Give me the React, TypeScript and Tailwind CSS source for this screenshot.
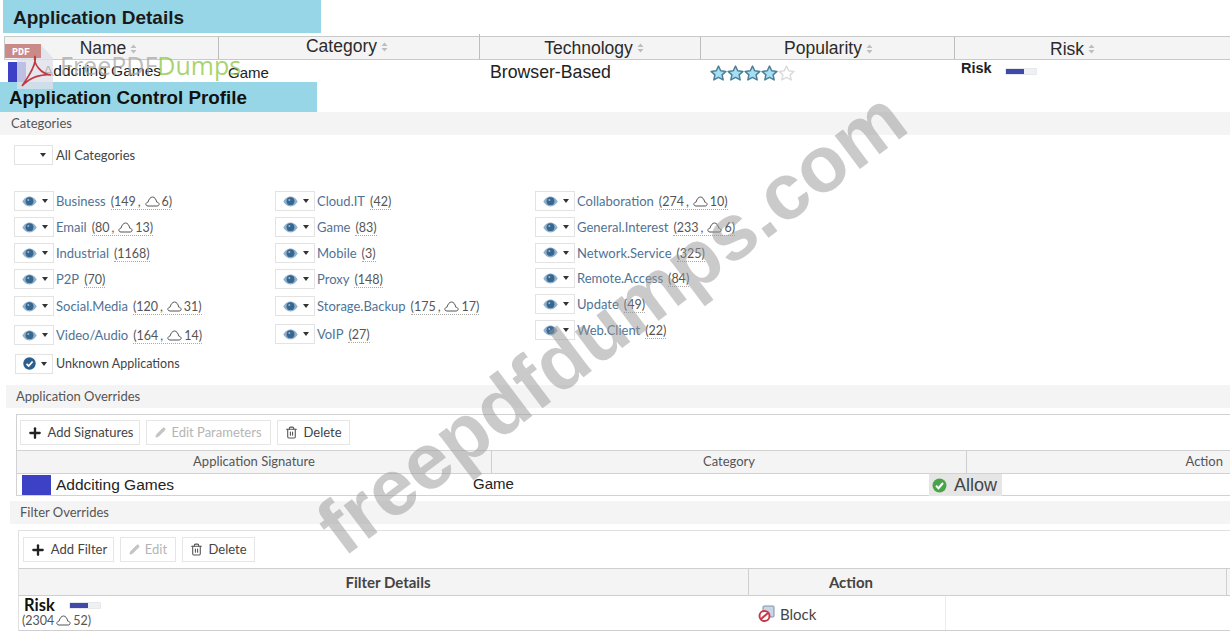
import React from 'react';
import { Plus, Pencil, Trash2 } from 'lucide-react';

const SANS = "font-['Liberation_Sans',Arial,sans-serif]";
const LATO = "font-['Lato','Open_Sans',sans-serif]";

function Sort() {
  return (
    <svg width="7" height="10" viewBox="0 0 7 10" className="inline-block ml-1 align-[-1px]">
      <path d="M3.5 0.5 L6.5 4 H0.5 Z M3.5 9.5 L6.5 6 H0.5 Z" fill="#b9bec2" />
    </svg>
  );
}

function Eye() {
  return (
    <svg width="15" height="11" viewBox="0 0 15 11">
      <path d="M0.3 5.5 C3 1.3 5.5 0.6 7.5 0.6 C9.5 0.6 12 1.3 14.7 5.5 C12 9.7 9.5 10.4 7.5 10.4 C5.5 10.4 3 9.7 0.3 5.5 Z" fill="#8fb0cc" />
      <circle cx="7.5" cy="5.2" r="3.9" fill="#37668f" />
      <circle cx="6.3" cy="4" r="1" fill="#9dbad3" />
    </svg>
  );
}

function Caret() {
  return (
    <svg width="6" height="4" viewBox="0 0 6 4">
      <path d="M0 0 H6 L3 4 Z" fill="#333" />
    </svg>
  );
}

function Cloud() {
  return (
    <svg width="15" height="11" viewBox="0 0 15 11" className="inline-block mx-[2px] align-[-1px]">
      <path d="M3 10 C1.3 10 .7 8.8 .9 7.8 C1.1 6.8 2 6.3 3 6.2 C3.8 3 5.6 1 7.5 1 C9.6 1 11 3 11.8 6.2 C13 6.3 14.1 7 14.1 8.2 C14.1 9.3 13.3 10 12 10 Z" fill="none" stroke="#555" strokeWidth="1" />
    </svg>
  );
}

function Count({ n, cloud }: { n: string; cloud?: string }) {
  return (
    <span className="ml-[5px] text-[12.5px] text-[#555] border-b border-dotted border-[#aaa] leading-[14px]">
      ({n}
      {cloud ? (
        <>
          <span className="mx-[2px]">,</span>
          <Cloud />
          {cloud}
        </>
      ) : null}
      )
    </span>
  );
}

type Cat = { name: string; n: string; cloud?: string; h: number };

function CatRow({ name, n, cloud, h }: Cat) {
  return (
    <div className="flex items-center" style={{ height: h }}>
      <div className="w-[40px] h-[20px] border border-[#e3e3e3] flex items-center justify-center gap-[5px] pl-[1px]">
        <Eye />
        <Caret />
      </div>
      <span className="ml-[2px] text-[13px] text-[#4f7396] translate-y-[1px]">{name}</span>
      <span className="translate-y-[1px]">
        <Count n={n} cloud={cloud} />
      </span>
    </div>
  );
}

const col1: Cat[] = [
  { name: 'Business', n: '149', cloud: '6', h: 26 },
  { name: 'Email', n: '80', cloud: '13', h: 26 },
  { name: 'Industrial', n: '1168', h: 26 },
  { name: 'P2P', n: '70', h: 26 },
  { name: 'Social.Media', n: '120', cloud: '31', h: 28 },
  { name: 'Video/Audio', n: '164', cloud: '14', h: 30 },
];
const col2: Cat[] = [
  { name: 'Cloud.IT', n: '42', h: 26 },
  { name: 'Game', n: '83', h: 26 },
  { name: 'Mobile', n: '3', h: 26 },
  { name: 'Proxy', n: '148', h: 26 },
  { name: 'Storage.Backup', n: '175', cloud: '17', h: 28 },
  { name: 'VoIP', n: '27', h: 28 },
];
const col3: Cat[] = [
  { name: 'Collaboration', n: '274', cloud: '10', h: 26 },
  { name: 'General.Interest', n: '233', cloud: '6', h: 26 },
  { name: 'Network.Service', n: '325', h: 25 },
  { name: 'Remote.Access', n: '84', h: 26 },
  { name: 'Update', n: '49', h: 26 },
  { name: 'Web.Client', n: '22', h: 26 },
];

function Bar({ label, className }: { label: string; className: string }) {
  return (
    <div className={`h-[23px] bg-[#f4f4f4] flex items-center text-[13px] text-[#555] ${className}`}>{label}</div>
  );
}

function Btn({ icon, label, off, w }: { icon: React.ReactNode; label: string; off?: boolean; w: string }) {
  return (
    <div className={`h-[25px] border border-[#e6e6e6] flex items-center justify-center gap-[5px] ${w} ${off ? 'text-[#b5b5b5]' : 'text-[#444]'}`}>
      {icon}
      <span>{label}</span>
    </div>
  );
}

function RiskMeter({ className }: { className: string }) {
  return (
    <span className={`inline-block w-[32px] h-[7px] bg-[#eef0f3] rounded-[1px] border border-[#e6e8ec] ${className}`}>
      <span className="block w-[18px] h-full bg-[#3f49a8]" />
    </span>
  );
}

function Star({ on }: { on: boolean }) {
  return (
    <svg width="17" height="16" viewBox="0 0 16 15" className="shrink-0">
      <path
        d="M8 1 L10.1 5.4 L15 6 L11.4 9.3 L12.4 14 L8 11.7 L3.6 14 L4.6 9.3 L1 6 L5.9 5.4 Z"
        fill={on ? '#a6def2' : '#ffffff'}
        stroke={on ? '#4d7f9a' : '#dcdcdc'}
        strokeWidth="1.4"
        strokeLinejoin="round"
      />
    </svg>
  );
}

export default function App() {
  return (
    <div className="relative w-[1230px] h-[634px] overflow-hidden bg-white">
      <div className={`${SANS}`}>
        {/* Application Details */}
        <div className="ml-[3px] w-[318px] h-[33px] bg-[#97d6e6] flex items-center pl-[10px] pt-[3px] text-[19px] font-bold text-[#1a1a1a]">
          Application Details
        </div>
        <div className="mt-[3px] ml-[4px] h-[24px] bg-[#f4f4f4] border-y border-[#c9c9c9] border-l flex text-[17.5px] text-[#2b2b2b]">
          <div className="w-[214px] border-r border-[#bdbdbd] flex items-center justify-center pr-[6px] pt-[1px]">Name<Sort /></div>
          <div className="w-[261px] border-r border-[#bdbdbd] flex items-center justify-center pr-[4px] -mt-[3px]">Category<Sort /></div>
          <div className="w-[221px] border-r border-[#bdbdbd] flex items-center justify-center pl-[8px]">Technology<Sort /></div>
          <div className="w-[254px] border-r border-[#bdbdbd] flex items-center justify-center pl-[2px] pt-[1px]">Popularity<Sort /></div>
          <div className="flex-1 flex items-center pl-[95px] pt-[2px]">Risk<Sort /></div>
        </div>
        <div className="h-[22px] flex items-center relative text-[#222]">
          <div className="ml-[8px] w-[18px] h-[20px] mt-[2px] bg-[#3c41c6]" />
          <span className="ml-[17px] w-[185px] text-[15.5px]">Addciting Games</span>
          <span className="w-[262px] text-[15px] mt-[5px]">Game</span>
          <span className="w-[220px] text-[17.7px] mt-[3px]">Browser-Based</span>
          <span className="flex w-[251px] mt-[4px]">
            <Star on />
            <Star on />
            <Star on />
            <Star on />
            <Star on={false} />
          </span>
          <span className="text-[14.5px] font-bold -mt-[4px]">Risk</span>
          <RiskMeter className="ml-[13px]" />
        </div>

        {/* Application Control Profile */}
        <div className="w-[317px] h-[31px] bg-[#97d6e6] flex items-center pl-[9px] pt-[1px] text-[18.8px] font-bold text-[#111]">
          Application Control Profile
        </div>
      </div>

      <div className={`${LATO} text-[13px]`}>
        <Bar label="Categories" className="-mt-[1px] pl-[11px] pt-[1px]" />

        <div className="mt-[10px] ml-[14px] flex items-center h-[20px]">
          <div className="w-[39px] h-[20px] border border-[#e3e3e3] flex items-center justify-end pr-[6px]">
            <Caret />
          </div>
          <span className="ml-[3px] text-[#444] translate-y-[1px]">All Categories</span>
        </div>

        {/* category filter columns */}
        <div className="mt-[23px] ml-[14px] flex">
          <div className="w-[261px]">
            {col1.map((c) => (
              <CatRow key={c.name} {...c} />
            ))}
            <div className="flex items-center h-[27px]">
              <div className="w-[38px] h-[20px] ml-[1px] pl-[1px] border border-[#e3e3e3] flex items-center justify-center gap-[5px]">
                <svg width="13" height="13" viewBox="0 0 13 13">
                  <circle cx="6.5" cy="6.5" r="6.2" fill="#2c5f8f" />
                  <path d="M3.5 6.8 L5.7 9 L9.6 4.5" fill="none" stroke="#fff" strokeWidth="1.8" />
                </svg>
                <Caret />
              </div>
              <span className="ml-[3px] text-[12.5px] text-[#444] translate-y-[1px]">Unknown Applications</span>
            </div>
          </div>
          <div className="w-[260px]">
            {col2.map((c) => (
              <CatRow key={c.name} {...c} />
            ))}
          </div>
          <div>
            {col3.map((c) => (
              <CatRow key={c.name} {...c} />
            ))}
          </div>
        </div>

        <Bar label="Application Overrides" className="mt-[8px] ml-[6px] pl-[10px]" />

        {/* Application Overrides */}
        <div className="mt-[6px] ml-[16px] h-[82px] border border-r-0 border-[#d2d2d2]">
          <div className="flex gap-[6px] pl-[3px] pt-[5px] h-[35px]">
            <Btn w="w-[120px]" label="Add Signatures" icon={<Plus size={16} strokeWidth={3.5} color="#222" />} />
            <Btn w="w-[125px]" label="Edit Parameters" off icon={<Pencil size={11} fill="#c4c4c4" color="#c4c4c4" />} />
            <Btn w="w-[73px]" label="Delete" icon={<Trash2 size={13} color="#555" />} />
          </div>
          <div className="h-[24px] bg-[#f4f4f4] border-y border-[#d2d2d2] flex text-[#555]">
            <div className="w-[475px] border-r border-[#cfcfcf] flex items-center justify-center">Application Signature</div>
            <div className="w-[475px] border-r border-[#cfcfcf] flex items-center justify-center">Category</div>
            <div className="flex-1 flex items-center justify-end pr-[7px]">Action</div>
          </div>
          <div className={`h-[21px] flex items-center text-[#222] ${SANS}`}>
            <div className="ml-[5px] w-[29px] h-[20px] bg-[#3c41c6]" />
            <span className="ml-[5px] w-[417px] text-[15.5px]">Addciting Games</span>
            <span className="w-[456px] text-[15px]">Game</span>
            <span className="w-[73px] h-[22px] mt-[1px] bg-[#e6e6e6] flex items-center pl-[3px] gap-[7px] text-[#444] text-[18px]">
              <svg width="15" height="15" viewBox="0 0 15 15">
                <circle cx="7.5" cy="7.5" r="7" fill="#4aa54a" />
                <path d="M4 7.8 L6.5 10.2 L11 5" fill="none" stroke="#fff" strokeWidth="2" />
              </svg>
              Allow
            </span>
          </div>
        </div>

        <Bar label="Filter Overrides" className="mt-[5px] ml-[10px] pl-[10px]" />

        {/* Filter Overrides */}
        <div className="mt-[6px] ml-[18px] h-[101px] border-t border-l border-[#e0e0e0]">
          <div className="flex gap-[6px] pl-[4px] pt-[6px] h-[37px]">
            <Btn w="w-[91px]" label="Add Filter" icon={<Plus size={16} strokeWidth={3.5} color="#222" />} />
            <Btn w="w-[56px]" label="Edit" off icon={<Pencil size={11} fill="#c4c4c4" color="#c4c4c4" />} />
            <Btn w="w-[73px]" label="Delete" icon={<Trash2 size={13} color="#555" />} />
          </div>
          <div className="h-[28px] bg-[#f4f4f4] border-y border-[#cfcfcf] flex font-bold text-[15px] text-[#444]">
            <div className="w-[730px] pl-[9px] border-r border-[#cfcfcf] flex items-center justify-center">Filter Details</div>
            <div className="w-[204px] flex items-center justify-center">Action</div>
            <div className="w-[274px] border-r border-[#cfcfcf]" />
          </div>
          <div className="h-[35px] border-b border-[#cfcfcf] flex">
            <div className="w-[731px] pl-[5px] pt-[1px]">
              <div className="flex items-center h-[17px] text-[16.5px] font-bold text-[#111]">
                Risk
                <RiskMeter className="ml-[14px]" />
              </div>
              <div className="h-[14px] leading-[13px] text-[12.5px] text-[#555] -ml-[2px]">
                (2304
                <Cloud />
                52)
              </div>
            </div>
            <div className="w-[196px] pt-[2px] border-r border-[#ececec] flex items-center pl-[8px] gap-[4px] text-[15px] text-[#444]">
              <svg width="18" height="18" viewBox="0 0 18 18">
                <rect x="5" y="1" width="11" height="11" rx="1" fill="#c9d6e6" stroke="#7d92ab" />
                <circle cx="6.5" cy="11" r="5" fill="#fff" stroke="#c9394a" strokeWidth="2" />
                <path d="M3 14 L10 8" stroke="#c9394a" strokeWidth="2" />
              </svg>
              Block
            </div>
          </div>
        </div>
      </div>

      {/* FreePDFDumps stamp over the details row */}
      <div className="absolute left-[5px] top-[42px] w-[48px] h-[48px]">
        <svg width="48" height="48" viewBox="0 0 48 48">
          <path d="M12 3 H36 L48 16 V47 H12 Z" fill="#dfe0ea" opacity="0.8" />
          <rect x="0" y="2" width="36" height="14" fill="#c98a88" />
          <text x="7" y="13" fontSize="10" fontWeight="700" fill="#fff" fontFamily="Liberation Mono, monospace">PDF</text>
          <path d="M17 44 C24 34 32 22 30 14 C28 22 36 32 46 33 C38 32 26 34 17 44 Z" fill="none" stroke="#c2383f" strokeWidth="1.6" />
        </svg>
      </div>
      <div className="absolute left-[60px] top-[50px] text-[25px] leading-[30px] text-[#a8a8a8]/75 font-['Open_Sans',sans-serif]">
        FreePDF<span className="text-[#8cc63f]/75">Dumps</span>
      </div>

      {/* site watermark */}
      <div
        className={`absolute left-[611px] top-[322px] -translate-x-1/2 -translate-y-1/2 -rotate-[37deg] whitespace-nowrap text-[79px] leading-none font-bold text-[#969696]/50 ${SANS}`}
      >
        freepdfdumps.com
      </div>
    </div>
  );
}
